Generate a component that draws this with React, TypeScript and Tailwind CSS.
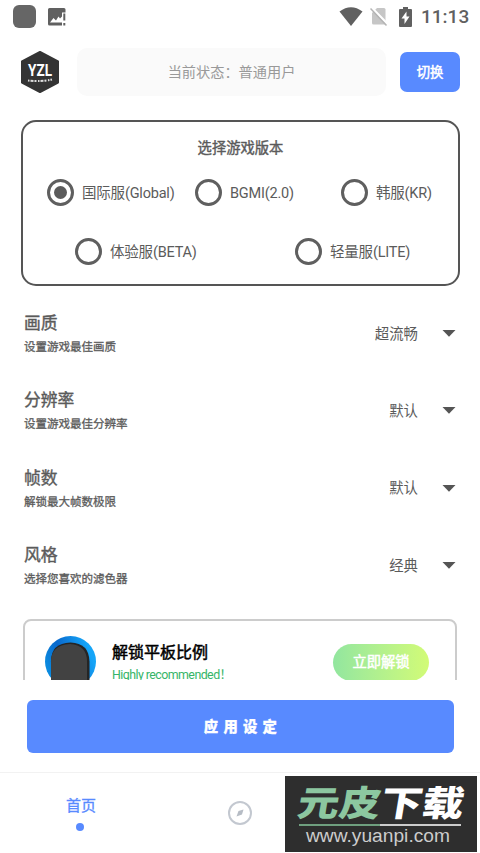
import React, { useState } from 'react';

const versions = [
  [
    { id: 'global', label: '国际服(Global)', className: 'w-[148px]' },
    { id: 'bgmi', label: 'BGMI(2.0)', className: 'w-[146px]' },
    { id: 'kr', label: '韩服(KR)', className: '' },
  ],
  [
    { id: 'beta', label: '体验服(BETA)', className: 'ml-[28px] w-[220px]' },
    { id: 'lite', label: '轻量服(LITE)', className: '' },
  ],
];

const settings = [
  { title: '画质', hint: '设置游戏最佳画质', value: '超流畅' },
  { title: '分辨率', hint: '设置游戏最佳分辨率', value: '默认' },
  { title: '帧数', hint: '解锁最大帧数极限', value: '默认' },
  { title: '风格', hint: '选择您喜欢的滤色器', value: '经典' },
];

const StatusBar: React.FC = () => (
  <div className="flex h-[33px] items-center pl-[13px] pr-[7px] text-[#606060]">
    <div className="h-[23px] w-[23px] rounded-[6px] bg-[#666]" />
    <svg className="ml-[12px]" width="18" height="18" viewBox="0 0 18 18">
      <path fill="currentColor" d="M1.5 0h14.5q1.500 0 1.500 1.500V4.500h-3.500V15H14V17.500H1.500Q0 17.500 0 16V1.500Q0 0 1.500 0Z" />
      <path fill="#fff" d="M2 14.500 5.500 10 8 12.500 10.500 8.500 12 10.500 14 8.500V14.500ZM14 5H18V18H14Z" />
      <path fill="currentColor" d="M15.300 5.500h2v7h-2zM15.300 15h2v2.500h-2z" />
    </svg>
    <svg className="ml-auto" width="24" height="19" viewBox="0 0 24 19">
      <path fill="currentColor" d="M0.500 4.500Q12-4 23.500 4.500L12 19Z" />
    </svg>
    <svg className="ml-[7px]" width="18" height="19" viewBox="0 0 18 19">
      <path fill="#c6c6c6" d="M7 1h7q1.500 0 1.500 1.500V17.500H3.500Q2 17.500 2 16V6Z" />
      <path stroke="#fff" strokeWidth="2.400" d="M1.500 0.500 18 17.500" />
      <path stroke="#b4b4b4" strokeWidth="1.500" d="M0.500 1.500 16.500 18.500" />
    </svg>
    <svg className="ml-[11px]" width="13" height="20" viewBox="0 0 13 20">
      <path fill="currentColor" d="M4 0h5v2h3q1 0 1 1v16q0 1-1 1H1q-1 0-1-1V3q0-1 1-1h3Z" />
      <path fill="#fff" d="M7.500 4.500 2.500 11.500H5.500V17L10.500 9.500H7.500Z" />
    </svg>
    <span className="ml-[9px] w-[52px] text-[19px] leading-[24px] font-medium whitespace-nowrap">11:13</span>
  </div>
);

const Logo: React.FC = () => (
  <svg width="38" height="42" viewBox="0 0 38 42">
    <path fill="#343434" stroke="#343434" strokeWidth="2" strokeLinejoin="round" d="M19 1 37 10.500V31.500L19 41 1 31.500V10.500Z" />
    <text x="19" y="24.500" fill="#fff" fontSize="17" fontWeight="700" fontFamily="Roboto, sans-serif" textAnchor="middle" textLength="24" lengthAdjust="spacingAndGlyphs">YZL</text>
    <path stroke="#ddd" strokeWidth="2" strokeDasharray="1.500 1 3 1 2 1.500" d="M7 29.500Q19 31 31 28.500" fill="none" />
  </svg>
);

const Radio: React.FC<{ label: string; checked: boolean; className: string; onSelect: () => void }> = ({ label, checked, className, onSelect }) => (
  <button role="radio" aria-checked={checked} onClick={onSelect} className={`flex items-center text-left ${className}`}>
    <span className="flex h-[27px] w-[27px] shrink-0 items-center justify-center rounded-full border-3 border-[#5f5f5f]">
      {checked && <span className="h-[13px] w-[13px] rounded-full bg-[#5b5b5b]" />}
    </span>
    <span className="mt-[2px] ml-[8px] text-[14.500px] leading-[20px] tracking-[-0.200px] whitespace-nowrap text-[#5b5b5b]">{label}</span>
  </button>
);

const App: React.FC = () => {
  const [version, setVersion] = useState('global');

  return (
    <div className="relative h-[853px] w-[480px] overflow-hidden bg-white font-['Roboto','Noto_Sans_CJK_SC',sans-serif] text-[#5b5b5b]">
      <StatusBar />

      <header className="mt-[15px] flex h-[48px] items-center pl-[21px]">
        <Logo />
        <div className="ml-[18px] flex h-[48px] w-[309px] items-center justify-center rounded-[10px] bg-[#fafafa] pt-[2px] text-[14.200px] text-[#999]">
          当前状态：普通用户
        </div>
        <button className="ml-[14px] h-[40px] w-[60px] rounded-[7px] bg-[#588aff] pt-px text-[13.300px] text-white [-webkit-text-stroke:0.500px]">切换</button>
      </header>

      <div className="h-[584px] overflow-hidden">
        <section className="mt-[24px] ml-[21px] h-[166px] w-[439px] rounded-[15px] border-2 border-[#555] pl-[24px]" role="radiogroup">
          <h2 className="mt-[16px] mr-[24px] text-center text-[14.300px] leading-[20px] [-webkit-text-stroke:0.400px]">选择游戏版本</h2>
          <div className="mt-[21px] flex">
            {versions[0].map((v) => (
              <Radio key={v.id} label={v.label} className={v.className} checked={version === v.id} onSelect={() => setVersion(v.id)} />
            ))}
          </div>
          <div className="mt-[32px] flex">
            {versions[1].map((v) => (
              <Radio key={v.id} label={v.label} className={v.className} checked={version === v.id} onSelect={() => setVersion(v.id)} />
            ))}
          </div>
        </section>

        <div className="mt-[9px] pr-[24px] pl-[24px]">
          {settings.map((s) => (
            <div key={s.title} className="flex h-[77.300px] items-center">
              <div className="pt-px">
                <h3 className="text-[16.800px] leading-[24px] [-webkit-text-stroke:0.400px]">{s.title}</h3>
                <p className="mt-[2px] text-[11.500px] leading-[20px] [-webkit-text-stroke:0.300px]">{s.hint}</p>
              </div>
              <span className="mt-[2px] ml-auto text-[14.400px] leading-[20px]">{s.value}</span>
              <svg className="ml-[24px]" width="14" height="7" viewBox="0 0 14 7">
                <path fill="#555" d="M0.500 0H13.500L7 6.700Z" />
              </svg>
            </div>
          ))}
        </div>

        <section className="mt-[15px] ml-[23px] flex h-[90px] w-[434px] rounded-[8px] border-2 border-[#ccc]">
          <svg className="mt-[15px] ml-[20px]" width="51" height="51" viewBox="0 0 51 51">
            <defs>
              <linearGradient id="ring" x1="0" y1="1" x2="1" y2="0.600">
                <stop offset="0" stopColor="#0b9be8" />
                <stop offset="0.500" stopColor="#0968cc" />
                <stop offset="1" stopColor="#15a5f8" />
              </linearGradient>
            </defs>
            <circle cx="25.500" cy="25.500" r="25.500" fill="url(#ring)" />
            <path fill="#252525" d="M6 51V25.500Q6 7 25.500 6.500Q44 7 44.500 25.500V51Z" />
            <path fill="#424242" d="M6 51V25.500Q6 9 25 8Q42 9 42 25.500V51Z" />
          </svg>
          <div className="mt-[20px] ml-[16px]">
            <h3 className="text-[16px] leading-[24px] text-black [-webkit-text-stroke:0.500px]">解锁平板比例</h3>
            <p className="mt-px text-[12.400px] leading-[18px] tracking-[-0.550px] text-[#36b568]">Highly recommended！</p>
          </div>
          <button className="mt-[23px] mr-[26px] ml-auto h-[37px] w-[96px] rounded-full bg-linear-to-r from-[#92e69f] to-[#d2fb76] text-[14.300px] text-white [-webkit-text-stroke:0.500px]">立即解锁</button>
        </section>
      </div>

      <button className="mt-[20px] ml-[27px] block h-[53px] w-[427px] rounded-[6px] bg-[#588aff] pt-[2px] pl-[5px] text-[14.300px] font-black tracking-[5.300px] text-white [-webkit-text-stroke:0.300px]">应用设定</button>

      <nav className="mt-[19px] flex h-[81px] border-t border-[#f2f2f2]">
        <div className="flex w-[160px] flex-col items-center text-[#588aff]">
          <span className="mt-[21px] ml-[2px] text-[15px] leading-[24px] [-webkit-text-stroke:0.300px]">首页</span>
          <span className="mt-[5px] h-[8px] w-[8px] rounded-full bg-[#588aff]" />
        </div>
        <div className="flex w-[160px] justify-center">
          <svg className="mt-[28px]" width="24" height="24" viewBox="0 0 24 24">
            <circle cx="12" cy="12" r="11" fill="none" stroke="#c3c8d0" strokeWidth="2" />
            <path fill="#b6bcc5" d="M15.500 8.500 14 13.500 8.500 15.500 10.500 10Z" />
          </svg>
        </div>
      </nav>

      <div className="absolute top-[776px] left-[285px] h-[76px] w-[192px] bg-[#2e2e2e] pt-[8px] pl-[13px]">
        <div className="h-[40px] origin-left scale-y-[0.850] skew-x-[-8deg] text-[41.500px] leading-[40px] font-black whitespace-nowrap text-white">
          <span className="text-[#8cc7a0]">元皮</span>下载
        </div>
        <div className="ml-[1px] flex w-[162px]">
          <span className="h-[2px] w-1/2 bg-[#6f9f7f]" />
          <span className="h-[2px] w-1/2 bg-[#ccc]" />
        </div>
        <p className="ml-[8px] font-['Liberation_Sans',sans-serif] text-[19.200px] leading-[20px] whitespace-nowrap text-[#ccc]">www.yuanpi.com</p>
      </div>
    </div>
  );
};

export default App;
